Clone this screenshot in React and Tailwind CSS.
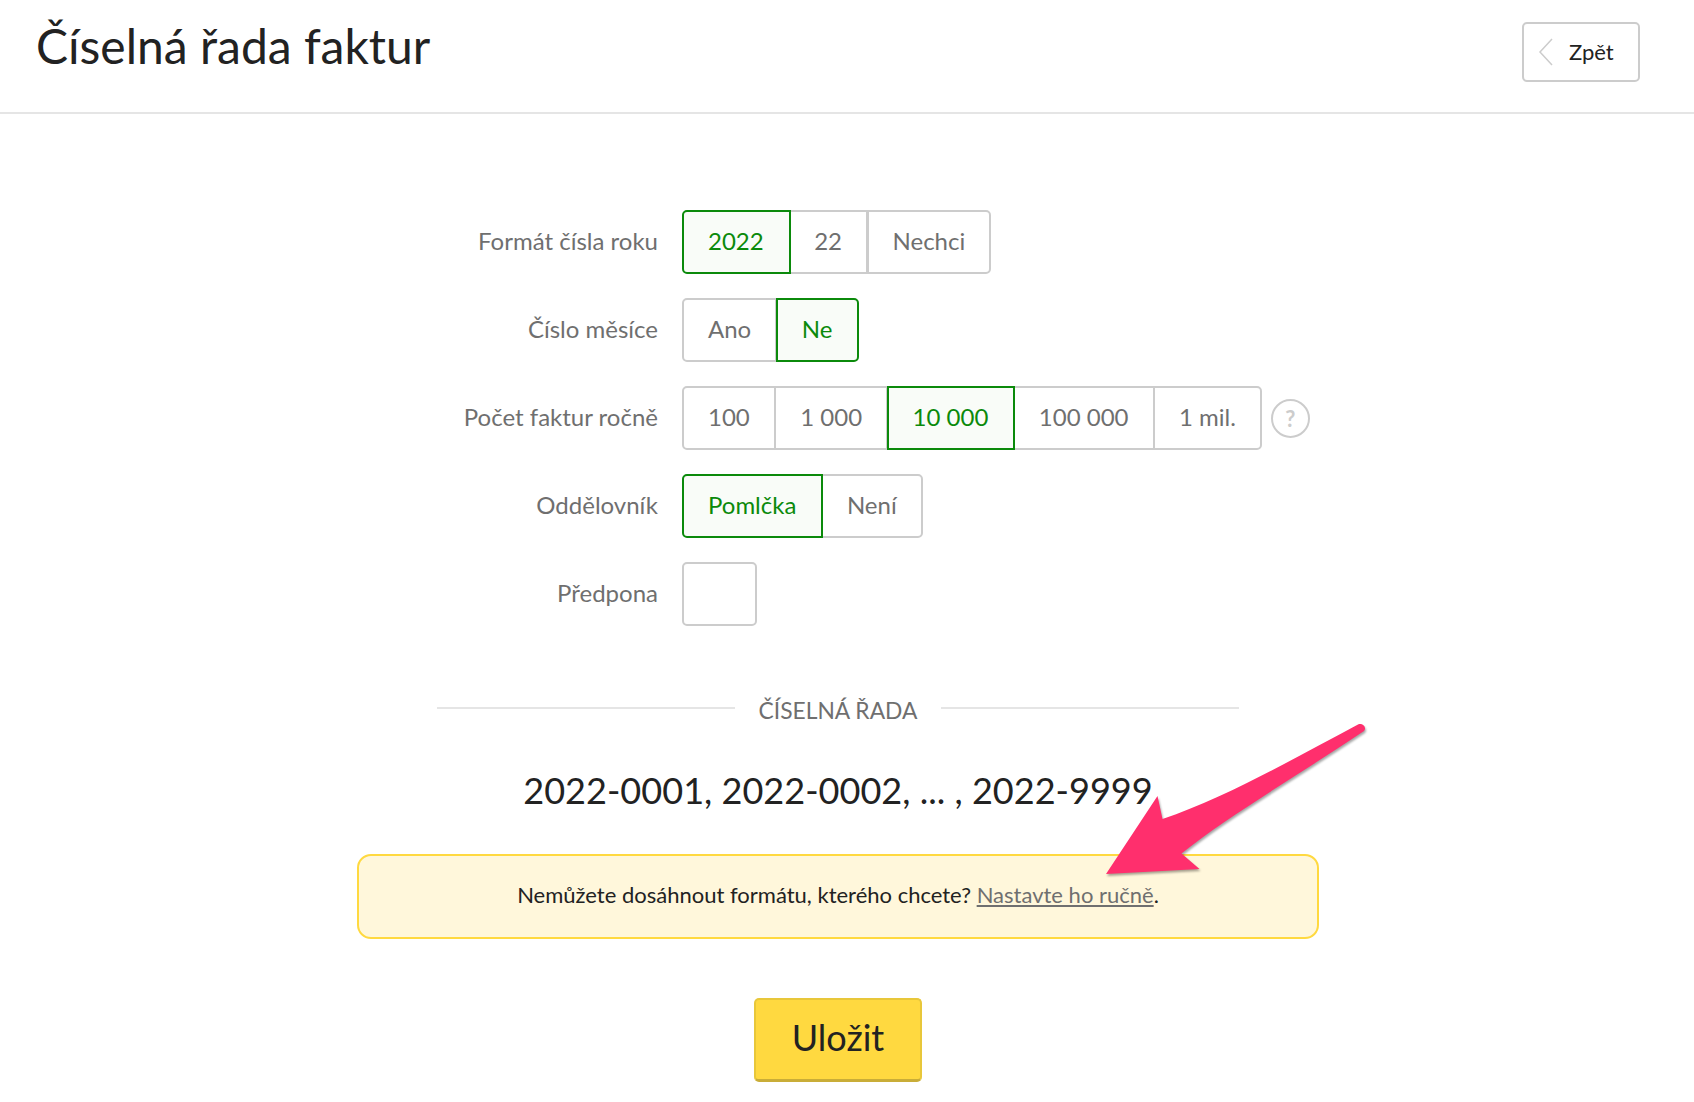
import React from 'react';

const rows = [
  { label: 'Formát čísla roku', options: ['2022', '22', 'Nechci'], active: '2022' },
  { label: 'Číslo měsíce', options: ['Ano', 'Ne'], active: 'Ne' },
  { label: 'Počet faktur ročně', options: ['100', '1 000', '10 000', '100 000', '1 mil.'], active: '10 000', help: true },
  { label: 'Oddělovník', options: ['Pomlčka', 'Není'], active: 'Pomlčka' },
];

const Segments = ({ options, active }) => (
  <div className="flex h-[64px]">
    {options.map((option, index) => {
      const isActive = option === active;
      const first = index === 0;
      const last = index === options.length - 1;
      return (
        <div
          key={option}
          className={`flex items-center pl-[24px] pb-[3px] border-2 -ml-[1.5px] first:ml-0 ${first ? 'rounded-l-[5px]' : ''} ${last ? 'rounded-r-[5px]' : ''} ${
            isActive
              ? 'relative z-10 pr-[25px] -mr-px border-[#0b8a0b] bg-[#f9fcf8] text-[#0b8a0b]'
              : 'pr-[24px] border-[#cccccc] text-[#6f6f6f]'
          }`}
        >
          {option}
        </div>
      );
    })}
  </div>
);

const App = () => {
  return (
    <div className="relative w-[1694px] h-[1102px] overflow-hidden bg-white font-['Lato','Noto_Sans',sans-serif] text-[24px] text-[#222222]">
      <header className="w-full h-[114px] border-b-2 border-[#e5e5e5] flex justify-between items-start pl-[36px] pr-[54px]">
        <h1 className="text-[48px] leading-[58px] mt-[17px]">Číselná řada faktur</h1>
        <button className="mt-[22px] w-[118px] h-[60px] pb-[1px] border-2 border-[#cccccc] rounded-[5px] flex items-center pl-[14px] gap-[15px] text-[22px]">
          <svg width="16" height="28" viewBox="0 0 16 28" fill="none" stroke="#cccccc" strokeWidth="1.5">
            <path d="M14 1 L2 14 L14 27" />
          </svg>
          Zpět
        </button>
      </header>

      <main className="w-[1676px] pt-[96px]">
        <div className="flex flex-col gap-[24px] pl-[357px]">
          {rows.map((row) => (
            <div key={row.label} className="flex items-center gap-[24px]">
              <div className="w-[301px] pb-[3px] text-right text-[#6f6f6f]">{row.label}</div>
              <Segments options={row.options} active={row.active} />
              {row.help && (
                <div className="-ml-[15px] w-[39px] h-[39px] rounded-full border-2 border-[#cccccc] flex items-center justify-center text-[22px] font-bold text-[#cccccc]">
                  ?
                </div>
              )}
            </div>
          ))}
          <div className="flex items-center gap-[24px]">
            <div className="w-[301px] pb-[3px] text-right text-[#6f6f6f]">Předpona</div>
            <div className="w-[75px] h-[64px] border-2 border-[#cccccc] rounded-[5px]"></div>
          </div>
        </div>

        <div className="w-[802px] mx-auto mt-[67px] flex items-center gap-[24px] text-[22.8px] leading-[32px] text-[#6f6f6f]">
          <div className="flex-1 h-[2px] mb-[4px] bg-[#e5e5e5]"></div>
          <span className="pt-[1px]">ČÍSELNÁ ŘADA</span>
          <div className="flex-1 h-[2px] mb-[4px] bg-[#e5e5e5]"></div>
        </div>

        <div className="mt-[41px] text-center text-[36.1px] leading-[46px]">2022-0001, 2022-0002, ... , 2022-9999</div>

        <div className="w-[962px] h-[85px] pb-[4px] mx-auto mt-[41px] flex items-center justify-center bg-[#fff7db] border-2 border-[#ffd940] rounded-[14px] text-[22px]">
          <span>
            Nemůžete dosáhnout formátu, kterého chcete?{' '}
            <a className="text-[#6f6f6f] underline">Nastavte ho ručně</a>.
          </span>
        </div>

        <button className="block w-[168px] h-[84px] pb-[5px] mx-auto mt-[59px] bg-[#ffd940] border-t-2 border-x-2 border-b-[3px] border-[#e8c73a] border-b-[#c9ad38] rounded-[5px] text-[36px]">
          Uložit
        </button>
      </main>

      {/* annotation arrow */}
      <svg className="absolute left-[1090px] top-[710px] drop-shadow-[1px_2px_1px_rgba(0,0,0,0.35)]" width="290" height="175" viewBox="1090 710 290 175">
        <path
          d="M1106 874 L1157.5 796 L1162.5 819 C1225 798 1295 758 1358 724.5 C1363 722.5 1367 728 1364 731 C1300 774 1225 818 1181.5 853.5 L1199.5 869 Z"
          fill="#ff2f6d"
        />
      </svg>
    </div>
  );
};

export default App;
